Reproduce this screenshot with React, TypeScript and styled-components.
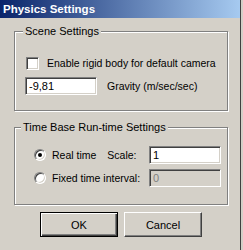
import React from 'react';
import styled, { createGlobalStyle } from 'styled-components';

const Global = createGlobalStyle`
  html, body { margin: 0; padding: 0; background: #d4d0c8; }
  body {
    width: 243px; height: 250px; overflow: hidden;
    font-family: "Liberation Sans", Arial, sans-serif;
    font-size: 10.5px; color: #000;
  }
  * { box-sizing: border-box; }
`;

const Dialog = styled.div`
  width: 241px;
  height: 250px;
  border-right: 1px solid #404040;
  background: #d4d0c8;
  display: flex;
  flex-direction: column;
`;

const TitleBar = styled.div`
  height: 18px;
  flex: none;
  background: linear-gradient(to right, #0a246a, #a6caf0);
  color: #fff;
  font-weight: bold;
  font-size: 11.5px;
  display: flex;
  align-items: center;
  padding-left: 3px;
`;

const Group = styled.fieldset<{ $top: number }>`
  margin: ${(p) => p.$top}px 12px 0 14px;
  padding: 0;
  border: 1px solid #808080;
  box-shadow: inset 1px 1px 0 #fff, 1px 1px 0 #fff;
  min-width: 0;
`;

const Legend = styled.legend<{ $indent: number }>`
  padding: 0 2px;
  margin-left: ${(p) => p.$indent}px;
  line-height: 13px;
  font-size: 11px;
  background: #d4d0c8;
`;

const GroupBody = styled.div<{ $pad: string; $gap: number }>`
  padding: ${(p) => p.$pad};
  display: flex;
  flex-direction: column;
  gap: ${(p) => p.$gap}px;
`;

const Row = styled.div`
  display: flex;
  align-items: center;
`;

const Check = styled.span`
  width: 13px;
  height: 13px;
  margin-left: 1px;
  background: #fff;
  border: 1px solid;
  border-color: #808080 #fff #fff #808080;
  box-shadow: inset 1px 1px 0 #404040, inset -1px -1px 0 #d4d0c8;
  flex: none;
`;

const Label = styled.span<{ $ml?: number }>`
  margin-left: ${(p) => p.$ml ?? 0}px;
  white-space: nowrap;
  line-height: 13px;
`;

const Field = styled.div<{ $disabled?: boolean; $ml?: string }>`
  width: 72px;
  height: 18px;
  flex: none;
  margin-left: ${(p) => p.$ml ?? '0'};
  background: ${(p) => (p.$disabled ? '#d4d0c8' : '#fff')};
  color: ${(p) => (p.$disabled ? '#808080' : '#000')};
  border: 1px solid;
  border-color: #808080 #fff #fff #808080;
  box-shadow: inset 1px 1px 0 #404040, inset -1px -1px 0 #d4d0c8;
  padding-left: 3px;
  display: flex;
  align-items: center;
  line-height: 13px;
  font-size: 11px;
`;

const Radio = styled.span<{ $checked?: boolean }>`
  width: 12px;
  height: 12px;
  flex: none;
  border-radius: 50%;
  background: #fff;
  border: 1px solid;
  border-color: #808080 #fff #fff #808080;
  box-shadow: inset 1px 1px 0 #404040, inset -1px -1px 0 #d4d0c8;
  display: flex;
  align-items: center;
  justify-content: center;
  &::after {
    content: '';
    width: 4px;
    height: 4px;
    border-radius: 50%;
    background: ${(p) => (p.$checked ? '#000' : 'transparent')};
  }
`;

const Buttons = styled.div`
  display: flex;
  gap: 6px;
  padding-left: 40px;
  margin-top: 7px;
`;

const Button = styled.div<{ $default?: boolean }>`
  width: 78px;
  height: 25px;
  display: flex;
  align-items: center;
  justify-content: center;
  font-size: 11px;
  background: #d4d0c8;
  border: 1px solid ${(p) => (p.$default ? '#000' : '#fff')};
  border-right-color: ${(p) => (p.$default ? '#000' : '#404040')};
  border-bottom-color: ${(p) => (p.$default ? '#000' : '#404040')};
  box-shadow: ${(p) =>
    p.$default
      ? 'inset 1px 1px 0 #fff, inset -1px -1px 0 #404040, inset -2px -2px 0 #808080'
      : 'inset -1px -1px 0 #808080'};
`;

export default function App() {
  return (
    <>
      <Global />
      <Dialog>
        <TitleBar>Physics Settings</TitleBar>
        <Group $top={7}>
          <Legend $indent={8}>Scene Settings</Legend>
          <GroupBody $pad="19px 0 15px 10px" $gap={7}>
            <Row>
              <Check />
              <Label $ml={8}>Enable rigid body for default camera</Label>
            </Row>
            <Row>
              <Field>-9,81</Field>
              <Label $ml={10}>Gravity (m/sec/sec)</Label>
            </Row>
          </GroupBody>
        </Group>
        <Group $top={10}>
          <Legend $indent={6}>Time Base Run-time Settings</Legend>
          <GroupBody $pad="12px 6px 17px 19px" $gap={5}>
            <Row>
              <Radio $checked />
              <Label $ml={6}>Real time</Label>
              <Label $ml={11}>Scale:</Label>
              <Field $ml="auto">1</Field>
            </Row>
            <Row>
              <Radio />
              <Label $ml={6}>Fixed time interval:</Label>
              <Field $ml="auto" $disabled>0</Field>
            </Row>
          </GroupBody>
        </Group>
        <Buttons>
          <Button $default>OK</Button>
          <Button>Cancel</Button>
        </Buttons>
      </Dialog>
    </>
  );
}
